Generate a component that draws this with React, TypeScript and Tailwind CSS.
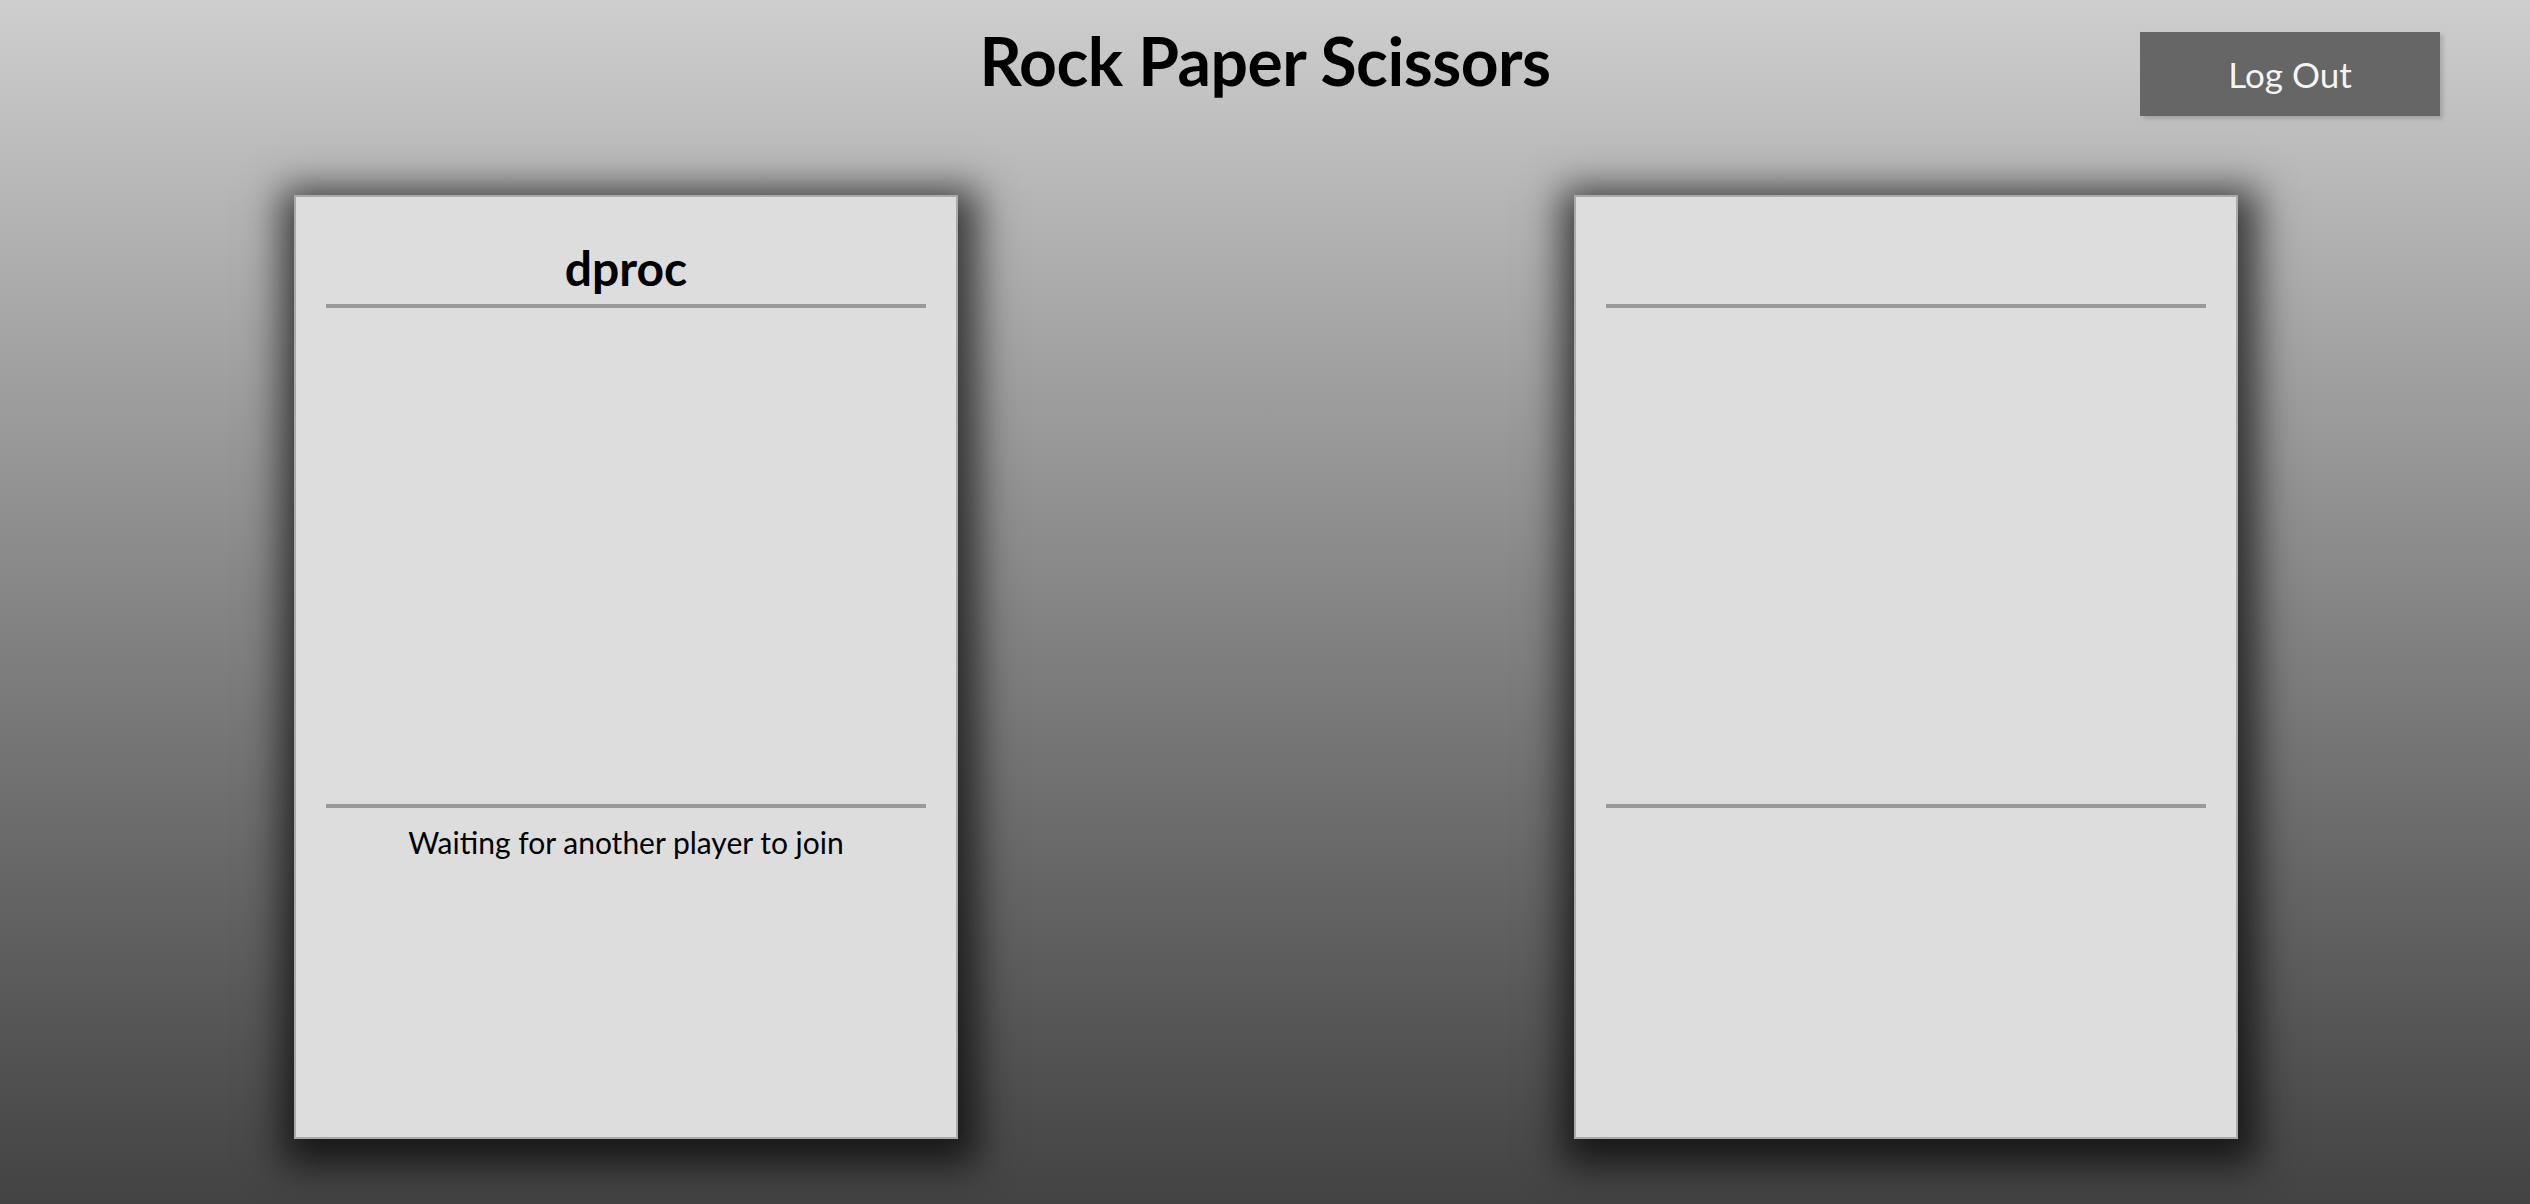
import React from "react";

function PlayerCard({ name, status }: { name?: string; status?: string }) {
  return (
    <div className="w-[664px] h-[944px] bg-[#dddddd] border-2 border-[#aaaaaa] shadow-[4px_10px_36px_16px_rgba(0,0,0,0.68)] px-[30px] flex flex-col">
      {/* Player name */}
      <div className="h-[107px] flex items-end justify-center pb-[12px]">
        <span
          className="text-[48px] leading-none font-bold text-black"
          style={{ fontFamily: "Lato, 'Noto Sans', sans-serif" }}
        >
          {name}
        </span>
      </div>
      <div className="h-[4px] bg-[#999999]" />

      {/* Move area */}
      <div className="h-[496px]" />
      <div className="h-[4px] bg-[#999999]" />

      {/* Status */}
      <div className="pt-[19px] text-center">
        <span
          className="text-[30px] leading-none text-black"
          style={{ fontFamily: "Lato, 'Noto Sans', sans-serif" }}
        >
          {status}
        </span>
      </div>
    </div>
  );
}

export default function App() {
  return (
    <div className="w-[2530px] h-[1204px] overflow-hidden bg-gradient-to-b from-[#cecece] to-[#434343] flex flex-col">
      {/* Header */}
      <div className="grid grid-cols-[1fr_auto_1fr] items-start h-[195px]">
        <div />
        <h1
          className="pt-[28px] text-[66px] leading-none font-bold text-black tracking-[-0.5px]"
          style={{ fontFamily: "Lato, 'Noto Sans', sans-serif" }}
        >
          Rock Paper Scissors
        </h1>
        <div className="flex justify-end pr-[90px] pt-[32px]">
          <button
            type="button"
            className="w-[300px] h-[84px] bg-[#666666] text-[#f4f4f4] text-[35px] shadow-[3px_3px_4px_rgba(0,0,0,0.15)]"
            style={{ fontFamily: "Lato, 'Noto Sans', sans-serif" }}
          >
            Log Out
          </button>
        </div>
      </div>

      {/* Players */}
      <div className="flex justify-between pl-[294px] pr-[292px]">
        <PlayerCard name="dproc" status="Waiting for another player to join" />
        <PlayerCard />
      </div>
    </div>
  );
}
